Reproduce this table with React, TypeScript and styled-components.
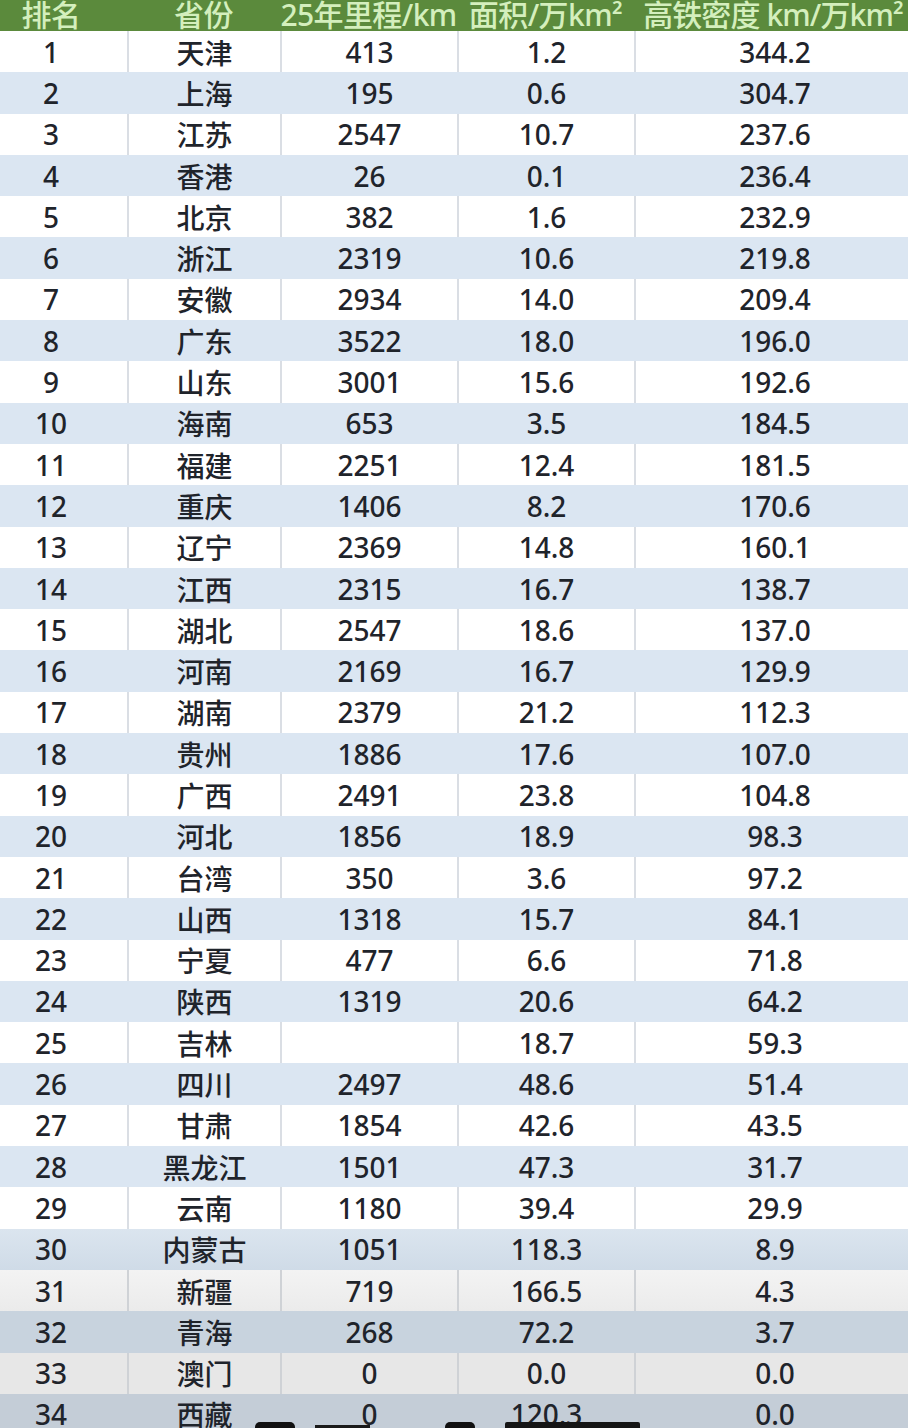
import React from 'react'
import styled, { createGlobalStyle } from 'styled-components'

// -------------------------------------------------------- //
//                            Data                          //
// -------------------------------------------------------- //

interface Row {
  rank: number,
  province: string,
  mileage: string,
  area: string,
  density: string
}

const raw = `天津 413 1.2 344.2
上海 195 0.6 304.7
江苏 2547 10.7 237.6
香港 26 0.1 236.4
北京 382 1.6 232.9
浙江 2319 10.6 219.8
安徽 2934 14.0 209.4
广东 3522 18.0 196.0
山东 3001 15.6 192.6
海南 653 3.5 184.5
福建 2251 12.4 181.5
重庆 1406 8.2 170.6
辽宁 2369 14.8 160.1
江西 2315 16.7 138.7
湖北 2547 18.6 137.0
河南 2169 16.7 129.9
湖南 2379 21.2 112.3
贵州 1886 17.6 107.0
广西 2491 23.8 104.8
河北 1856 18.9 98.3
台湾 350 3.6 97.2
山西 1318 15.7 84.1
宁夏 477 6.6 71.8
陕西 1319 20.6 64.2
吉林 - 18.7 59.3
四川 2497 48.6 51.4
甘肃 1854 42.6 43.5
黑龙江 1501 47.3 31.7
云南 1180 39.4 29.9
内蒙古 1051 118.3 8.9
新疆 719 166.5 4.3
青海 268 72.2 3.7
澳门 0 0.0 0.0
西藏 0 120.3 0.0`

const rows: Row[] = raw.split('\n').map((line, i) => {
  const [province, mileage, area, density] = line.split(' ')
  return { rank: i + 1, province, mileage: mileage === '-' ? '' : mileage, area, density }
})

// the bottom of the frame fades to grey in the source video
const fadeColors: Record<number, string> = {
  30: 'linear-gradient(#dbe5ef, #cfdbe7)',
  31: 'linear-gradient(#f3f3f3, #ebebeb)',
  32: '#c8d3de',
  33: '#e7e7e7',
  34: '#c4cdd7'
}

const rowBackground = (rank: number) =>
  fadeColors[rank] ?? (rank % 2 === 0 ? '#dbe6f2' : '#ffffff')

const dividerColor = (rank: number) => {
  if (rank % 2 === 0) return 'transparent'
  return rank > 30 ? '#cfd2d6' : '#dadee4'
}

// -------------------------------------------------------- //
//                       Main Component                     //
// -------------------------------------------------------- //

export default function App() {
  return (
    <>
      <GlobalStyle />
      <Page>
        <Header>
          <HeadCell>排名</HeadCell>
          <HeadCell>省份</HeadCell>
          <HeadCell>25年里程/km</HeadCell>
          <HeadCell>面积/万km²</HeadCell>
          <HeadCell $last>高铁密度 km/万km²</HeadCell>
        </Header>
        {rows.map(r => (
          <TableRow key={r.rank} $bg={rowBackground(r.rank)} $divider={dividerColor(r.rank)}>
            <Cell $first>{r.rank}</Cell>
            <Cell>{r.province}</Cell>
            <Cell>{r.mileage}</Cell>
            <Cell>{r.area}</Cell>
            <Cell $last>{r.density}</Cell>
          </TableRow>
        ))}
        <SubtitleEdge viewBox="0 0 420 12" preserveAspectRatio="none">
          <rect x="15" y="6" width="40" height="10" rx="5" fill="#111" />
          <rect x="75" y="9" width="55" height="6" fill="#1a1a1a" />
          <rect x="205" y="6" width="30" height="10" rx="5" fill="#111" />
          <rect x="265" y="6" width="135" height="10" rx="2" fill="#151515" />
        </SubtitleEdge>
      </Page>
    </>
  )
}

// -------------------------------------------------------- //
//                           Styles                         //
// -------------------------------------------------------- //

const GlobalStyle = createGlobalStyle`
  html, body {
    margin: 0;
    padding: 0;
    background: #ffffff;
  }
  body {
    font-family: "Noto Sans", "Noto Sans CJK SC", sans-serif;
  }
`

const Page = styled.div`
  position: relative;
  width: 908px;
  height: 1428px;
  overflow: hidden;
  background: #ffffff;
`

const columns = '127px 153px 177px 177px 274px'

const Header = styled.div`
  display: grid;
  grid-template-columns: ${columns};
  height: 31px;
  background: #5b8a3c;
  overflow: hidden;
`

const HeadCell = styled.div<{ $last?: boolean }>`
  display: flex;
  align-items: flex-end;
  justify-content: center;
  padding-bottom: 4px;
  padding-left: ${p => (p.$last ? '4px' : '0')};
  font-family: "Noto Sans", "Noto Sans CJK SC", sans-serif;
  font-size: 30px;
  font-weight: 500;
  line-height: 1;
  color: #d4efbd;
  white-space: nowrap;
  letter-spacing: ${p => (p.$last ? '-0.9px' : '-0.6px')};
  &:first-child {
    padding-right: 25px;
  }
`

const TableRow = styled.div<{ $bg: string, $divider: string }>`
  display: grid;
  grid-template-columns: ${columns};
  height: 41.3px;
  background: ${p => p.$bg};
  --divider: ${p => p.$divider};
`

const Cell = styled.div<{ $first?: boolean, $last?: boolean }>`
  display: flex;
  align-items: center;
  justify-content: center;
  border-left: ${p => (p.$first ? 'none' : '2px solid var(--divider)')};
  padding-right: ${p => (p.$first ? '25px' : '0')};
  padding-left: ${p => (p.$last ? '6px' : '0')};
  font-size: 28px;
  font-weight: 500;
  color: #1f242b;
  white-space: nowrap;
`

const SubtitleEdge = styled.svg`
  position: absolute;
  left: 240px;
  bottom: 0;
  width: 420px;
  height: 12px;
`
